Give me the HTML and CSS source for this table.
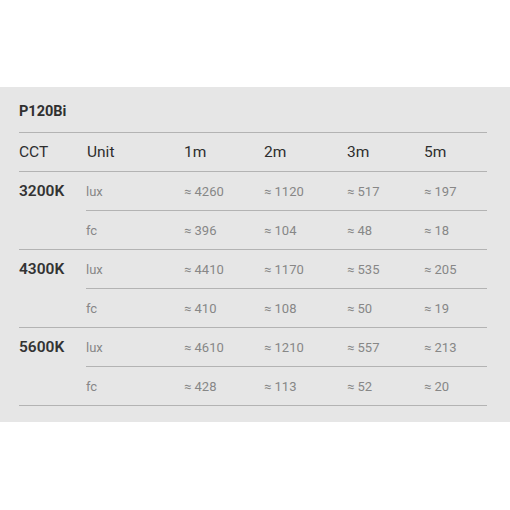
FILE: index.html
```html
<!DOCTYPE html>
<html>
<head>
<meta charset="utf-8">
<link rel="stylesheet" href="styles.css">
</head>
<body>
<section class="band">
  <div class="title">P120Bi</div>
  <div class="table">
    <div class="head">
      <div>CCT</div><div>Unit</div><div>1m</div><div>2m</div><div>3m</div><div>5m</div>
    </div>
    <div class="group">
      <div class="cct">3200K</div>
      <div class="subs">
        <div class="sub"><div>lux</div><div>≈ 4260</div><div>≈ 1120</div><div>≈ 517</div><div>≈ 197</div></div>
        <div class="sub"><div>fc</div><div>≈ 396</div><div>≈ 104</div><div>≈ 48</div><div>≈ 18</div></div>
      </div>
    </div>
    <div class="group">
      <div class="cct">4300K</div>
      <div class="subs">
        <div class="sub"><div>lux</div><div>≈ 4410</div><div>≈ 1170</div><div>≈ 535</div><div>≈ 205</div></div>
        <div class="sub"><div>fc</div><div>≈ 410</div><div>≈ 108</div><div>≈ 50</div><div>≈ 19</div></div>
      </div>
    </div>
    <div class="group">
      <div class="cct">5600K</div>
      <div class="subs">
        <div class="sub"><div>lux</div><div>≈ 4610</div><div>≈ 1210</div><div>≈ 557</div><div>≈ 213</div></div>
        <div class="sub"><div>fc</div><div>≈ 428</div><div>≈ 113</div><div>≈ 52</div><div>≈ 20</div></div>
      </div>
    </div>
  </div>
</section>
</body>
</html>
```
FILE: styles.css
```css
html, body {
  margin: 0;
  padding: 0;
  background: #ffffff;
}
body {
  font-family: Roboto, "Noto Sans", "Liberation Sans", sans-serif;
  width: 510px;
  height: 510px;
}
.band {
  margin-top: 87px;
  background: #e6e6e6;
  padding: 0 23px 16px 19px;
}
.title {
  height: 45px;
  display: flex;
  align-items: center;
  font-size: 14.5px;
  font-weight: 700;
  color: #303030;
  padding-top: 4px;
  box-sizing: border-box;
}
.table {
  border-top: 1px solid #b3b3b3;
}
.head {
  display: grid;
  grid-template-columns: 68px 97px 80px 83px 77px 1fr;
  height: 38px;
  align-items: center;
  border-bottom: 1px solid #b3b3b3;
  font-size: 15.5px;
  font-weight: 400;
  color: #2e2e2e;
}
.group {
  display: flex;
  border-bottom: 1px solid #b3b3b3;
}
.cct {
  width: 67px;
  height: 38px;
  display: flex;
  align-items: center;
  font-size: 15.5px;
  font-weight: 600;
  color: #333333;
}
.subs {
  flex: 1;
  display: flex;
  flex-direction: column;
}
.sub {
  display: grid;
  grid-template-columns: 98px 80px 83px 77px 1fr;
  height: 38px;
  align-items: center;
  font-size: 13px;
  color: #878787;
}
.sub + .sub {
  border-top: 1px solid #b3b3b3;
}
```
